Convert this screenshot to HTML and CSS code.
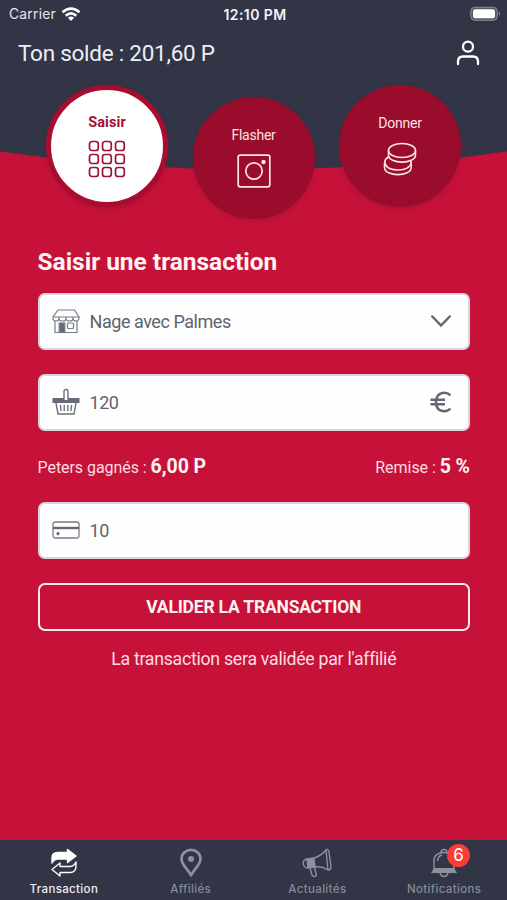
FILE: index.html
```html
<!DOCTYPE html>
<html lang="fr">
<head>
<meta charset="utf-8">
<title>Transaction</title>
<link rel="stylesheet" href="styles.css">
</head>
<body>
<div class="app">
  <svg class="backdrop" viewBox="0 0 507 190" aria-hidden="true"><path d="M0 0H507V151.500Q253.500 187.500 0 151.500Z"/></svg>
  <div class="status">
    <div class="carrier"><span>Carrier</span>
      <svg width="20" height="15" viewBox="0 0 20 15" fill="none" stroke="#fff" stroke-width="2.700"><path d="M1.500 5.300Q10-2 18.500 5.300M4.700 8.700Q10 4.200 15.300 8.700"/><path d="M6.900 10.700Q10 8.300 13.100 10.700L10 14Z" fill="#fff" stroke="none"/></svg>
    </div>
    <div class="clock">12:10 PM</div>
    <svg class="battery" width="31" height="16" viewBox="0 0 31 16"><rect x=".8" y="1.300" width="26.500" height="13" rx="4" fill="#555866" stroke="#8b8d98"/><rect x="3" y="3.300" width="22" height="9" rx="2" fill="#fff"/><path d="M28.800 5.600Q31.500 7.800 28.800 10Z" fill="#8b8d98"/></svg>
  </div>
  <header class="header">
    <h1>Ton solde : 201,60 P</h1>
    <svg width="24" height="26" viewBox="0 0 24 26" fill="none" stroke="#fff" stroke-width="2.300" stroke-linecap="round"><circle cx="12" cy="6.700" r="5"/><path d="M2 24V21.500Q2 16.500 7 16.500H17Q22 16.500 22 21.500V24"/></svg>
  </header>
  <nav class="modes">
    <button class="mode active"><span>Saisir</span>
      <svg width="38" height="38" viewBox="0 0 38 38" fill="none" stroke="#9b1237" stroke-width="1.700"><rect x="1.500" y="1.500" width="8.800" height="9" rx="2.500"/><rect x="14.500" y="1.500" width="8.800" height="9" rx="2.500"/><rect x="27.500" y="1.500" width="8.800" height="9" rx="2.500"/><rect x="1.500" y="14.500" width="8.800" height="9" rx="2.500"/><rect x="14.500" y="14.500" width="8.800" height="9" rx="2.500"/><rect x="27.500" y="14.500" width="8.800" height="9" rx="2.500"/><rect x="1.500" y="27.500" width="8.800" height="9" rx="2.500"/><rect x="14.500" y="27.500" width="8.800" height="9" rx="2.500"/><rect x="27.500" y="27.500" width="8.800" height="9" rx="2.500"/></svg>
    </button>
    <button class="mode lower"><span>Flasher</span>
      <svg width="34" height="34" viewBox="0 0 34 34" fill="none" stroke="#ffe3e6" stroke-width="1.700"><rect x="1.200" y="1.200" width="31.600" height="31.600" rx="2"/><circle cx="17" cy="17" r="8.200"/><circle cx="26.500" cy="8" r="2.200" fill="#ffe3e6" stroke="none"/></svg>
    </button>
    <button class="mode"><span>Donner</span>
      <svg width="34" height="34" viewBox="0 0 34 34" fill="none" stroke="#ffe3e6" stroke-width="1.600"><ellipse cx="19" cy="8.500" rx="13.500" ry="7"/><path d="M5.500 8.500V13C5.500 22.500 32.500 22.500 32.500 13V8.500M5.300 15C-1 19 1.500 28 15 28C25 28 28.500 23.500 28 19M1.500 21V25.500C1.500 35 28.200 35 28.200 25.500V20"/></svg>
    </button>
  </nav>
  <main class="form">
    <h2>Saisir une transaction</h2>
    <div class="field">
      <svg class="lead" width="28" height="26" viewBox="0 0 28 26" fill="none" stroke="#777c88" stroke-width="1.200"><path d="M6 2H22.500L27 9V10.500Q26.500 13 24 13Q21 13 21 10.500Q21 13 17.500 13Q14 13 14 10.500Q14 13 10.500 13Q7 13 7 10.500Q7 13 4 13Q1 13 1 10.500V9ZM1 9H27M3 13V24.500H25V13M7 10.500V8.500M14 10.500V8.500M21 10.500V8.500"/><rect x="7.200" y="15" width="5.600" height="9.500" fill="#646a78"/><rect x="15.500" y="15" width="6" height="5.500" rx="1"/></svg>
      <span>Nage avec Palmes</span>
      <svg class="trail" width="22" height="14" viewBox="0 0 22 14" fill="none" stroke="#626773" stroke-width="2.500" stroke-linecap="round"><path d="M2.300 2.500L11 11.500L19.700 2.500"/></svg>
    </div>
    <div class="field second">
      <svg class="lead" width="28" height="28" viewBox="0 0 28 28" fill="none" stroke="#6d727e" stroke-width="1.400"><path d="M.5 10H27.500V15H.5Z" fill="#646a78" stroke="none"/><path d="M12 12V3.500Q12 1.500 14 1.500Q16 1.500 16 3.500V12" fill="#fff"/><path d="M4 15L6 26H22L24 15M8.500 17L9 23M12.200 17V23M15.800 17V23M19.500 17L19 23"/></svg>
      <span>120</span>
      <svg class="trail" width="22" height="22" viewBox="0 0 22 22" fill="none" stroke="#626773" stroke-width="2.500"><path d="M20.500 4.300C16 .2 6 .5 6 11C6 21.500 16 21.800 20.500 17.700M.5 8.700H15M.5 13.200H15"/></svg>
    </div>
    <div class="summary">
      <div class="earned">Peters gagnés : <strong>6,00 P</strong></div>
      <div class="discount">Remise : <strong>5 %</strong></div>
    </div>
    <div class="field">
      <svg class="lead" width="28" height="18" viewBox="0 0 28 18" fill="none" stroke="#777c88" stroke-width="1.300"><rect x="1" y="1" width="26" height="16" rx="2.500"/><path d="M1 7H27" stroke="#646a78" stroke-width="2.400"/><circle cx="6" cy="12.700" r="1.600" fill="#646a78" stroke="none"/></svg>
      <span>10</span>
    </div>
    <button class="submit"><span>VALIDER LA TRANSACTION</span></button>
    <p><span>La transaction sera validée par l'affilié</span></p>
  </main>
  <footer class="tabs">
    <div class="tab current">
      <svg width="28" height="30" viewBox="0 0 28 30" fill="none" stroke="#fff" stroke-width="1.400" stroke-linejoin="round"><path d="M2 15V10Q2 4.500 8 4.500H17.500V1.500L26 8L17.500 14.500V11H8Q4 11 2 15Z" fill="#fff"/><path d="M26 14V18Q26 24.500 20 24.500H10V28L2 21.500L10 15V18.500H20Q24 18.500 26 14Z"/></svg>
      <span>Transaction</span>
    </div>
    <div class="tab">
      <svg width="24" height="30" viewBox="0 0 24 30" fill="none" stroke="#8c919d" stroke-width="2.700" stroke-linejoin="round"><path d="M12 27.300C9.500 22 2.500 17 2.500 10.800A9.500 9 0 0 1 21.500 10.800C21.500 17 14.500 22 12 27.300Z"/><circle cx="12" cy="11" r="3" fill="#8c919d" stroke="none"/></svg>
      <span>Affiliés</span>
    </div>
    <div class="tab">
      <svg width="30" height="30" viewBox="0 0 30 30" fill="none" stroke="#8c919d" stroke-width="1.400" stroke-linejoin="round"><path d="M12 10Q19 8 24 2L26 22Q20 18 13 19"/><path d="M24 2Q26.500 .5 27 4L29 19Q29 22 26 22"/><path d="M5 11L12 10L13 19L6 20Z" fill="#8c919d"/><path d="M5 11Q-.5 12 2 18Q3 20 6 20M8 20L10 27Q12 30 14.500 27.500L12.500 19.500"/></svg>
      <span>Actualités</span>
    </div>
    <div class="tab">
      <div class="bell"><svg width="28" height="30" viewBox="0 0 28 30" fill="none" stroke="#8c919d" stroke-width="1.400"><path d="M4 21V12C4 2 24 2 24 12V21M11 4.500Q11 1.500 14 1.500Q17 1.500 17 4.500M7.500 13Q8 8 12 7"/><path d="M4 20H24L27 25H1Z" fill="#8c919d" stroke="none"/><path d="M10 25Q11 28.500 14 28.500Q17 28.500 18 25"/></svg><b class="badge">6</b></div>
      <span>Notifications</span>
    </div>
  </footer>
</div>
</body>
</html>
```
FILE: styles.css
```css
* { box-sizing: border-box; }
body { margin: 0; font-family: Roboto, "Liberation Sans", sans-serif; }
h1, h2, p { margin: 0; }
button { font: inherit; color: inherit; padding: 0; border: 0; }
svg { display: block; flex: none; }
.app { position: relative; display: flex; flex-direction: column; width: 507px; height: 900px; overflow: hidden; background: #c61239; color: #fff; isolation: isolate; }
.backdrop { position: absolute; z-index: -1; top: 0; left: 0; width: 507px; height: 190px; fill: #323546; }
.status { height: 28px; display: grid; grid-template-columns: 1fr auto 1fr; align-items: center; padding: 0 6px 0 9px; font: 13.800px Inter, sans-serif; color: #e4e5ed; }
.carrier { display: flex; align-items: center; gap: 5px; letter-spacing: .25px; }
.clock { font-weight: 600; font-size: 14px; letter-spacing: .4px; color: #f3f3f8; }
.battery { justify-self: end; }
.header { height: 49px; display: flex; align-items: center; justify-content: space-between; padding: 0 27px 0 18px; }
.header h1 { font-size: 22.500px; font-weight: 400; color: #eeeef5; letter-spacing: -.25px; }
.modes { height: 156px; display: flex; align-items: flex-start; gap: 24.500px; padding: 8px 0 0 46px; }
.mode { width: 122px; height: 122px; border-radius: 50%; background: #990c2b; display: flex; flex-direction: column; align-items: center; gap: 11px; padding-top: 30px; font-size: 14px; letter-spacing: -.25px; line-height: 16px; color: #ffe0e5; box-shadow: 0 2px 4px #80102f55; }
.mode.active { border: 5px solid #a80c2e; background: #fff; color: #a01035; font-size: 14.500px; letter-spacing: .1px; font-weight: 700; padding-top: 25px; gap: 9px; }
.mode.lower { margin-top: 12px; }
.form { flex: 1; padding: 14px 37px 0 37.500px; }
.form h2 { height: 46px; font-size: 24.500px; line-height: 29px; font-weight: 700; letter-spacing: -.02px; color: #fff3f3; }
.field { height: 57px; display: flex; align-items: center; gap: 10px; padding: 0 16px 1px 12px; border: 2px solid #d9d4df; border-radius: 7px; background: #fefefe; color: #5e636e; font-size: 18px; letter-spacing: -.45px; }
.field.second { margin-top: 24px; }
.trail { margin-left: auto; }
.summary { height: 71px; display: flex; justify-content: space-between; align-items: center; font-size: 16px; letter-spacing: -.05px; color: #ffdce0; }
.summary strong { font-size: 19.500px; color: #fff3f3; }
.submit { display: block; width: 100%; height: 48px; margin-top: 24px; border: 2.500px solid #ffe9ed; border-radius: 7px; background: none; font-size: 17.500px; letter-spacing: -.2px; font-weight: 700; color: #fff0f2; }
.form p { margin-top: 17px; text-align: center; font-size: 17.700px; letter-spacing: -.26px; line-height: 22px; color: #ffdce0; }
.tabs { height: 60px; display: grid; grid-template-columns: repeat(4, 1fr); background: #323546; font: 500 11.500px Inter, sans-serif; color: #858a97; }
.tab { display: flex; flex-direction: column; align-items: center; gap: 4px; padding: 8px 0 0 1px; letter-spacing: .35px; line-height: 14px; }
.tab.current { color: #eeeef3; }
.bell { position: relative; }
.badge { position: absolute; top: -4px; left: 17px; width: 23px; height: 23px; border-radius: 50%; background: #fb3b36; color: #fff; text-align: center; font: 17px/23px Inter, sans-serif; letter-spacing: 0; }
```
